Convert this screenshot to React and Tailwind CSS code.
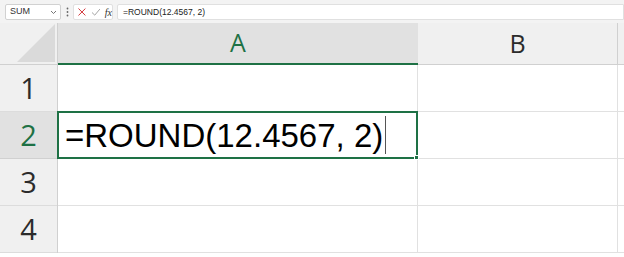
import React from "react";

const GREEN = "#1e7145";

// formula bar across the top
const FormulaBar = () => (
  <div className="flex h-[23px] items-center bg-[#f3f3f3] pl-[5px] pt-[1px]">
    <div className="flex h-[16px] w-[56px] items-center justify-between rounded-[2px] border border-[#d1d1d1] bg-white pl-[4px] pr-[3px]">
      <span className="text-[9px] text-[#333]" style={{ fontFamily: "'Liberation Sans', sans-serif" }}>
        SUM
      </span>
      <svg width="7" height="5" viewBox="0 0 7 5">
        <path d="M1 1 L3.5 3.5 L6 1" stroke="#666" strokeWidth="0.9" fill="none" />
      </svg>
    </div>
    <svg className="ml-[5px]" width="3" height="10" viewBox="0 0 3 10">
      <circle cx="1.5" cy="1.5" r="0.9" fill="#666" />
      <circle cx="1.5" cy="5" r="0.9" fill="#666" />
      <circle cx="1.5" cy="8.5" r="0.9" fill="#666" />
    </svg>
    <div className="ml-[4px] flex h-[16px] w-[40px] items-center gap-[4px] rounded-[2px] border border-[#e0e0e0] bg-white pl-[3px]">
      <svg width="10" height="10" viewBox="0 0 10 10">
        <path d="M1.5 1.5 L8.5 8.5 M8.5 1.5 L1.5 8.5" stroke="#d13438" strokeWidth="1" />
      </svg>
      <svg width="10" height="10" viewBox="0 0 10 10">
        <path d="M1 5.5 L3.8 8.2 L9 2" stroke="#9a9a9a" strokeWidth="0.9" fill="none" />
      </svg>
      <span
        className="text-[10px] italic text-[#333]"
        style={{ fontFamily: "'Liberation Serif', serif" }}
      >
        fx
      </span>
    </div>
    <div className="ml-[4px] flex h-[16px] flex-1 items-center rounded-l-[2px] border border-[#e0e0e0] bg-white pl-[5px]">
      <span className="text-[8.5px] text-[#222]" style={{ fontFamily: "'Liberation Sans', sans-serif" }}>
        =ROUND(12.4567, 2)
      </span>
    </div>
  </div>
);

const headFont = { fontFamily: "'Open Sans', 'Noto Sans', sans-serif" };

const RowHead = ({ n, active }) => (
  <div
    className={`flex h-[47px] items-center justify-center border-b text-[29px] ${
      active
        ? "border-[#d0d0d0] bg-[#e1e1e1] text-[#1e7145]"
        : "border-[#dcdcdc] bg-[#f0f0f0] text-[#2b2b2b]"
    }`}
    style={headFont}
  >
    {n}
  </div>
);

const App = () => {
  return (
    <div className="h-[257px] w-[624px] overflow-hidden bg-white">
      <FormulaBar />
      <div className="grid grid-cols-[58px_360px_200px_1fr]">
        {/* corner */}
        <div className="relative h-[42px] border-b border-r border-[#d0d0d0] bg-[#f0f0f0]">
          <svg className="absolute bottom-[2px] right-[2px]" width="38" height="38" viewBox="0 0 38 38">
            <path d="M38 0 L38 38 L0 38 Z" fill="#dadada" />
          </svg>
        </div>
        <div
          className="flex h-[42px] items-center justify-center border-b-2 border-[#1e7145] bg-[#e1e1e1] text-[25px] text-[#1e7145]"
          style={headFont}
        >
          A
        </div>
        <div
          className="flex h-[42px] items-center justify-center border-b border-r border-[#d0d0d0] bg-[#f0f0f0] text-[25px] text-[#2b2b2b]"
          style={headFont}
        >
          B
        </div>
        <div className="h-[42px] border-b border-[#d0d0d0] bg-[#f0f0f0]" />

        {/* row headers + cells */}
        <div className="row-span-4 flex flex-col border-r border-[#d0d0d0]">
          <RowHead n={1} />
          <RowHead n={2} active />
          <RowHead n={3} />
          <RowHead n={4} />
        </div>
        <div className="col-span-3 flex flex-col">
          <div className="grid h-[47px] grid-cols-[360px_200px_1fr]">
            <div className="border-b border-r border-[#e1e1e1]" />
            <div className="border-b border-r border-[#e1e1e1]" />
            <div className="border-b border-[#e1e1e1]" />
          </div>
          <div className="grid h-[47px] grid-cols-[360px_200px_1fr]">
            <div className="relative -ml-[1px] -mt-[1px] flex h-[48px] items-center border-2 border-[#1e7145] pl-[6px]">
              <span
                className="text-[33px] leading-none text-black"
                style={{ fontFamily: "'Liberation Sans', Arial, sans-serif" }}
              >
                =ROUND(12.4567, 2)
              </span>
              <span className="ml-[2px] h-[38px] w-[1px] bg-[#555]" />
              <span className="absolute -bottom-[3px] -right-[3px] h-[5px] w-[5px] border border-white bg-[#1e7145]" />
            </div>
            <div className="border-b border-r border-[#e1e1e1]" />
            <div className="border-b border-[#e1e1e1]" />
          </div>
          {[3, 4].map((r) => (
            <div key={r} className="grid h-[47px] grid-cols-[360px_200px_1fr]">
              <div className="border-b border-r border-[#e1e1e1]" />
              <div className="border-b border-r border-[#e1e1e1]" />
              <div className="border-b border-[#e1e1e1]" />
            </div>
          ))}
        </div>
      </div>
    </div>
  );
};

export default App;
